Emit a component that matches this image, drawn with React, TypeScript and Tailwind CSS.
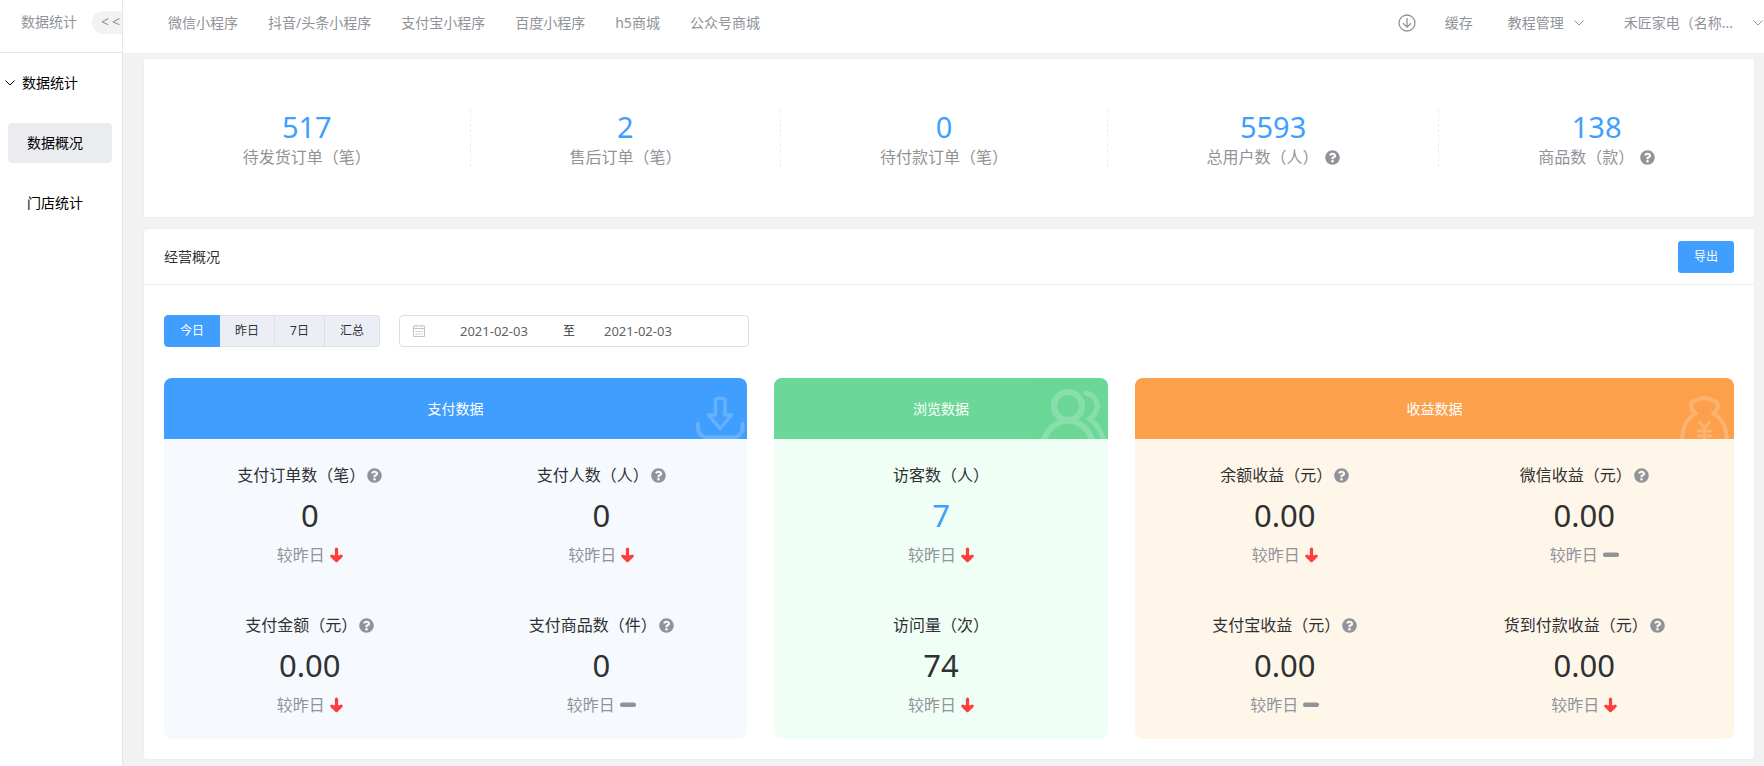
import { ReactNode, useState } from 'react';
import { FaQuestionCircle } from 'react-icons/fa';

const CHANNELS = ['微信小程序', '抖音/头条小程序', '支付宝小程序', '百度小程序', 'h5商城', '公众号商城'];

const STATS = [
  { label: '待发货订单（笔）', value: '517' },
  { label: '售后订单（笔）', value: '2' },
  { label: '待付款订单（笔）', value: '0' },
  { label: '总用户数（人）', value: '5593', help: true },
  { label: '商品数（款）', value: '138', help: true },
];

const RANGES = ['今日', '昨日', '7日', '汇总'];

type Trend = 'down' | 'flat';

interface Metric {
  label: string;
  value: string;
  trend: Trend;
  help?: boolean;
  highlight?: boolean;
}

const PAY_METRICS: Metric[] = [
  { label: '支付订单数（笔）', value: '0', trend: 'down', help: true },
  { label: '支付人数（人）', value: '0', trend: 'down', help: true },
  { label: '支付金额（元）', value: '0.00', trend: 'down', help: true },
  { label: '支付商品数（件）', value: '0', trend: 'flat', help: true },
];

const VISIT_METRICS: Metric[] = [
  { label: '访客数（人）', value: '7', trend: 'down', highlight: true },
  { label: '访问量（次）', value: '74', trend: 'down' },
];

const INCOME_METRICS: Metric[] = [
  { label: '余额收益（元）', value: '0.00', trend: 'down', help: true },
  { label: '微信收益（元）', value: '0.00', trend: 'flat', help: true },
  { label: '支付宝收益（元）', value: '0.00', trend: 'flat', help: true },
  { label: '货到付款收益（元）', value: '0.00', trend: 'down', help: true },
];

function ChevronDown() {
  return (
    <svg className="w-[10px] h-[6px] shrink-0" viewBox="0 0 10 6" fill="none" stroke="currentColor">
      <path d="M0.5 0.5 5 5 9.5 0.5" />
    </svg>
  );
}

function DownloadCircleIcon() {
  return (
    <svg className="w-[18px] h-[18px]" viewBox="0 0 18 18" fill="none" stroke="currentColor" strokeWidth="1.3">
      <circle cx="9" cy="9" r="8" />
      <path d="M9 4v9M5 9.2l4 4 4-4" />
    </svg>
  );
}

function CalendarIcon() {
  return (
    <svg className="w-[14px] h-[14px] shrink-0 text-[#c0c4cc]" viewBox="0 0 14 14" fill="none" stroke="currentColor">
      <path d="M1.5 2h11v10.500h-11zM1.500 4.500h11M4 0.500v2M10 0.500v2" />
      <path d="M3.500 7.500h7M3.500 10h7" strokeDasharray="1.800 0.800" />
    </svg>
  );
}

function TrendIcon({ trend }: { trend: Trend }) {
  if (trend === 'flat') {
    return (
      <svg className="w-4 h-4" viewBox="0 0 16 16" fill="#909399">
        <rect x="0" y="5.500" width="16" height="4.400" rx="2" />
      </svg>
    );
  }
  return (
    <svg className="w-[13px] h-4" viewBox="0 0 13 16" fill="none" stroke="#ff3d3d" strokeLinecap="round" strokeLinejoin="round">
      <path d="M6.500 2.200v9" strokeWidth="3.200" />
      <path d="M1.900 9.200 6.500 13.600l4.600-4.400" strokeWidth="3.200" />
      <path d="M4 9.500h5l-2.500 3z" strokeWidth="2.400" fill="#ff3d3d" />
    </svg>
  );
}

function TrayArt() {
  return (
    <svg className="w-[51px] h-[44px]" viewBox="0 0 51 44" fill="none" stroke="currentColor" strokeLinecap="round" strokeLinejoin="round">
      <path d="M19.500 20V5.500a2 2 0 0 1 2-2h5.500a2 2 0 0 1 2 2V20h6.500L24.200 33.500 12.500 20z" strokeWidth="3.500" />
      <path d="M2 29v3c0 7 4 10.500 10 10.500h24.500c6 0 10-3.500 10-10.500v-3" strokeWidth="4" />
    </svg>
  );
}

function PeopleArt() {
  return (
    <svg className="w-[68px] h-[51px]" viewBox="0 0 68 51" fill="none" stroke="currentColor" strokeLinecap="round">
      <path d="M28 4a14 14 0 1 0 0 28a14 14 0 1 0 0-28M3.500 53C12 26 44 26 52.500 53" strokeWidth="6" />
      <path d="M46 5C58 7 62 22 49.500 31C57 36 61 42 64 53" strokeWidth="5" strokeLinejoin="round" />
    </svg>
  );
}

function MoneyBagArt() {
  return (
    <svg className="w-[56px] h-[44px]" viewBox="0 0 56 44" fill="none" stroke="currentColor" strokeLinecap="round" strokeLinejoin="round">
      <path
        d="M4 47C4 33 9 23 18 18.500C12 14 10.500 6 19 5.500C22 2 31 2 34 5.500C42.500 6 41 14 35 18.500C44 23 49 33 49 47"
        strokeWidth="4"
      />
      <path d="M21.500 27l5 6 5-6M26.500 33v14M20 36h13M20 41h13" strokeWidth="2.800" />
    </svg>
  );
}

function MetricCell({ metric }: { metric: Metric }) {
  return (
    <div className="h-[150px] pt-4 text-base leading-10 text-center text-[#303133]">
      <div className="flex items-center justify-center gap-0.5">
        <span>{metric.label}</span>
        {metric.help && <FaQuestionCircle className="w-[15px] h-[15px] text-[#909399]" />}
      </div>
      <div className={`text-[31px] ${metric.highlight ? 'text-[#409eff]' : ''}`}>{metric.value}</div>
      <div className="flex items-center justify-center gap-[5px] text-[#909399]">
        <span>较昨日</span>
        <TrendIcon trend={metric.trend} />
      </div>
    </div>
  );
}

interface PanelProps {
  title: string;
  metrics: Metric[];
  art: ReactNode;
  headClass: string;
  bodyClass: string;
}

function Panel({ title, metrics, art, headClass, bodyClass }: PanelProps) {
  return (
    <section className="rounded-lg overflow-hidden">
      <div className={`relative flex items-center justify-center h-[61px] text-sm text-white ${headClass}`}>
        <h3>{title}</h3>
        <div className="absolute right-0 bottom-0 text-white opacity-20">{art}</div>
      </div>
      <div className={`grid ${bodyClass}`}>
        {metrics.map((metric) => (
          <MetricCell key={metric.label} metric={metric} />
        ))}
      </div>
    </section>
  );
}

export default function App() {
  const [range, setRange] = useState('今日');
  const [startDate, setStartDate] = useState('2021-02-03');
  const [endDate, setEndDate] = useState('2021-02-03');

  return (
    <div className="flex min-h-screen bg-[#f2f2f2] text-sm whitespace-nowrap font-['Noto_Sans','Noto_Sans_CJK_SC',sans-serif]">
      {/* Sidebar */}
      <aside className="w-[123px] shrink-0 bg-white border-r border-[#e6e6e6] text-black">
        <div className="flex items-center justify-between h-[53px] pl-[21px] pb-2 border-b border-[#e6e6e6] text-[#909399]">
          <span>数据统计</span>
          <button className="flex items-center gap-[3px] h-[23px] w-[30px] pl-[9px] rounded-l-full bg-[#f2f2f2]" aria-label="收起菜单">
            <span>&lt;</span>
            <span>&lt;</span>
          </button>
        </div>
        <nav>
          <button className="flex items-center gap-[7px] w-full h-[60px] pl-[5px]">
            <ChevronDown />
            <span>数据统计</span>
          </button>
          <div className="flex flex-col gap-5 py-2.5 pl-2 pr-2.5">
            <a href="#overview" className="flex items-center h-10 pl-[19px] rounded bg-[#ebecf0]">数据概况</a>
            <a href="#stores" className="flex items-center h-10 pl-[19px] rounded">门店统计</a>
          </div>
        </nav>
      </aside>

      <div className="flex-1 min-w-0">
        {/* Top bar */}
        <header className="flex items-center justify-between h-[53px] pl-[45px] pr-px pb-2 bg-white text-[#909399]">
          <nav className="flex gap-[30px]">
            {CHANNELS.map((name) => (
              <a key={name} href="#channel">{name}</a>
            ))}
          </nav>
          <div className="flex items-center">
            <button className="mr-[29px]" aria-label="下载">
              <DownloadCircleIcon />
            </button>
            <a href="#cache" className="mr-[35px]">缓存</a>
            <button className="flex items-center gap-2.5 mr-10">
              教程管理
              <ChevronDown />
            </button>
            <button className="flex items-center gap-5">
              禾匠家电（名称...
              <ChevronDown />
            </button>
          </div>
        </header>

        <main className="flex flex-col gap-2.5 pt-[5px] pl-5 pr-[9px] pb-[7px]">
          {/* Totals */}
          <section className="flex py-[50px] bg-white border border-[#ebeef5]">
            {STATS.map((stat) => (
              <div key={stat.label} className="flex-auto h-[58px] text-center border-r border-dashed border-[#ebeef5] last:border-r-0">
                <div className="text-[29px] leading-9 text-[#409eff]">{stat.value}</div>
                <div className="flex items-center justify-center gap-1.5 text-base leading-6 text-[#909399]">
                  <span>{stat.label}</span>
                  {stat.help && <FaQuestionCircle className="w-[15px] h-[15px]" />}
                </div>
              </div>
            ))}
          </section>

          {/* Overview */}
          <section className="bg-white border border-[#ebeef5] rounded">
            <div className="flex items-center justify-between h-14 px-5 border-b border-[#ebeef5]">
              <h2 className="text-[#303133]">经营概况</h2>
              <button className="h-8 px-4 rounded-[3px] bg-[#409eff] text-xs text-white">导出</button>
            </div>

            <div className="px-5 pt-[30px] pb-5">
              <div className="flex items-center gap-[19px]">
                <div className="flex text-xs text-[#303133]">
                  {RANGES.map((name) => (
                    <button
                      key={name}
                      onClick={() => setRange(name)}
                      className={`h-8 px-[15px] border-y border-r first:border-l first:rounded-l last:rounded-r ${
                        name === range ? 'bg-[#409eff] border-[#409eff] text-white' : 'bg-[#ebeef5] border-[#dcdfe6]'
                      }`}
                    >
                      {name}
                    </button>
                  ))}
                </div>
                <div className="flex items-center w-[350px] h-8 pl-3 border border-[#dcdfe6] rounded text-[13px] text-[#606266]">
                  <CalendarIcon />
                  <input
                    className="w-28 ml-3 text-center outline-none"
                    aria-label="开始日期"
                    value={startDate}
                    onChange={(e) => setStartDate(e.target.value)}
                  />
                  <span className="w-8 pl-1.5 text-center text-xs text-[#303133]">至</span>
                  <input
                    className="w-28 text-center outline-none"
                    aria-label="结束日期"
                    value={endDate}
                    onChange={(e) => setEndDate(e.target.value)}
                  />
                </div>
              </div>

              <div className="grid grid-cols-[583fr_334fr_599fr] gap-[27px] mt-[31px]">
                <Panel
                  title="支付数据"
                  metrics={PAY_METRICS}
                  art={<TrayArt />}
                  headClass="bg-[#409eff]"
                  bodyClass="grid-cols-2 bg-[#f6faff]"
                />
                <Panel
                  title="浏览数据"
                  metrics={VISIT_METRICS}
                  art={<PeopleArt />}
                  headClass="bg-[#6bd798]"
                  bodyClass="grid-cols-1 bg-[#f0fff6]"
                />
                <Panel
                  title="收益数据"
                  metrics={INCOME_METRICS}
                  art={<MoneyBagArt />}
                  headClass="bg-[#fca04c]"
                  bodyClass="grid-cols-2 bg-[#fff6ea]"
                />
              </div>
            </div>
          </section>
        </main>
      </div>
    </div>
  );
}
